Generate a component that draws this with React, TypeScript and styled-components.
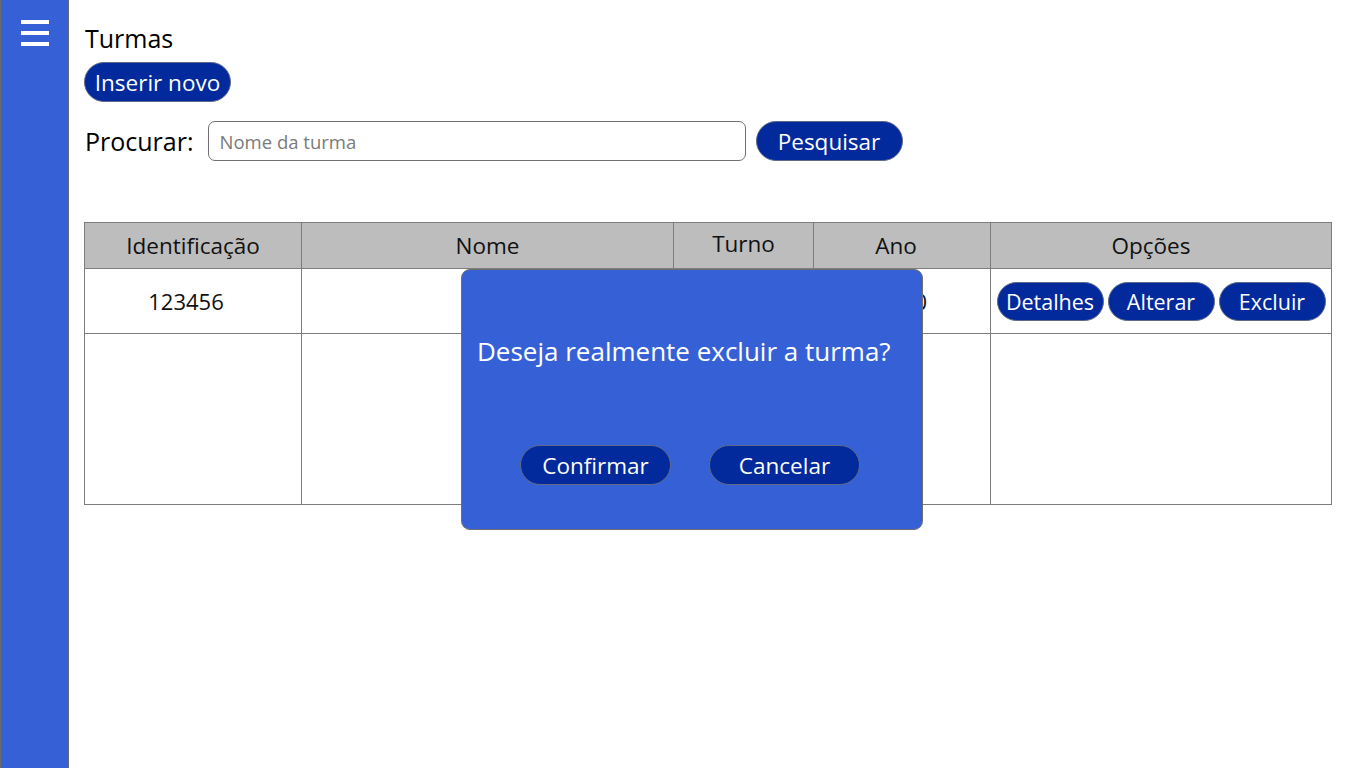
import styled, { createGlobalStyle } from 'styled-components'

const GlobalStyle = createGlobalStyle`
  body {
    margin: 0;
    font-family: 'Open Sans', 'Noto Sans', sans-serif;
    background: #ffffff;
  }
`

const rows = [
  { id: '123456', nome: '', turno: 'Manhã', ano: '2020' },
  { id: '', nome: '', turno: '', ano: '' },
]

export default function App() {
  return (
    <>
      <GlobalStyle />
      <Layout>
        <Sidebar>
          <MenuButton aria-label="Menu">
            <svg width="28" height="26" viewBox="0 0 28 26">
              <rect x="0" y="0" width="28" height="4" fill="#fff" />
              <rect x="0" y="11" width="28" height="4" fill="#fff" />
              <rect x="0" y="22" width="28" height="4" fill="#fff" />
            </svg>
          </MenuButton>
        </Sidebar>
        <Main>
          <Title>Turmas</Title>
          <PillButton $width={147}>Inserir novo</PillButton>
          <SearchRow>
            <SearchLabel>Procurar:</SearchLabel>
            <SearchInput placeholder="Nome da turma" />
            <PillButton $width={147}>Pesquisar</PillButton>
          </SearchRow>
          <TableWrapper>
            <Table>
              <colgroup>
                <col style={{ width: 217 }} />
                <col style={{ width: 372 }} />
                <col style={{ width: 140 }} />
                <col style={{ width: 177 }} />
                <col style={{ width: 341 }} />
              </colgroup>
              <thead>
                <tr>
                  <HeadCell>Identificação</HeadCell>
                  <HeadCell>Nome</HeadCell>
                  <HeadCell $raised>Turno</HeadCell>
                  <HeadCell $shiftLeft={12}>Ano</HeadCell>
                  <HeadCell $shiftLeft={20}>Opções</HeadCell>
                </tr>
              </thead>
              <tbody>
                {rows.map((row, i) => (
                  <BodyRow key={i} $height={i === 0 ? 65 : 171}>
                    <Cell $shiftLeft={14}>{row.id}</Cell>
                    <Cell>{row.nome}</Cell>
                    <Cell>{row.turno}</Cell>
                    <Cell>{row.ano}</Cell>
                    <Cell>
                      {i === 0 && (
                        <Options>
                          <SmallPill>Detalhes</SmallPill>
                          <SmallPill>Alterar</SmallPill>
                          <SmallPill>Excluir</SmallPill>
                        </Options>
                      )}
                    </Cell>
                  </BodyRow>
                ))}
              </tbody>
            </Table>
            <Modal>
              <ModalText>Deseja realmente excluir a turma?</ModalText>
              <ModalActions>
                <PillButton $width={151}>Confirmar</PillButton>
                <PillButton $width={151}>Cancelar</PillButton>
              </ModalActions>
            </Modal>
          </TableWrapper>
        </Main>
      </Layout>
    </>
  )
}

const Layout = styled.div`
  display: flex;
  min-height: 100vh;
`

const Sidebar = styled.aside`
  width: 69px;
  flex-shrink: 0;
  background-color: #3661d6;
  border-right: 1px solid #6b6b6b;
  border-left: 1px solid #6b6b6b;
  box-sizing: border-box;
  display: flex;
  justify-content: center;
  padding-top: 20px;
  height: 768px;
`

const MenuButton = styled.button`
  background: transparent;
  border: 0;
  padding: 0;
  height: 26px;
  display: flex;
  cursor: pointer;
`

const Main = styled.main`
  flex: 1;
  padding: 20px 34px 0 15px;
  display: flex;
  flex-direction: column;
  align-items: flex-start;
`

const Title = styled.h1`
  margin: 0 0 6px 1px;
  font-size: 25px;
  font-weight: 400;
  line-height: 36px;
  color: #000;
`

const PillButton = styled.button<{ $width: number }>`
  width: ${(p) => p.$width}px;
  height: 40px;
  border-radius: 20px;
  border: 1px solid #5f6a86;
  background-color: #022a9c;
  color: #ffffff;
  font-family: 'Open Sans', 'Noto Sans', sans-serif;
  font-size: 22.5px;
  padding: 0;
  cursor: pointer;
  white-space: nowrap;
`

const SearchRow = styled.div`
  display: flex;
  align-items: center;
  margin-top: 19px;
  gap: 10px;
`

const SearchLabel = styled.span`
  font-size: 25px;
  color: #000;
  margin-left: 1px;
  margin-right: 4px;
`

const SearchInput = styled.input`
  width: 538px;
  height: 40px;
  box-sizing: border-box;
  border: 1px solid #707070;
  border-radius: 7px;
  padding: 0 11px;
  font-family: 'Open Sans', 'Noto Sans', sans-serif;
  font-size: 18.5px;
  outline: none;

  &::placeholder {
    color: #7a7a7a;
  }
`

const TableWrapper = styled.div`
  position: relative;
  margin-top: 61px;
`

const Table = styled.table`
  border-collapse: collapse;
  table-layout: fixed;
  width: 1247px;
`

const HeadCell = styled.th<{ $raised?: boolean; $shiftLeft?: number }>`
  height: 46px;
  box-sizing: border-box;
  background-color: #bdbdbd;
  border: 1px solid #7d7d7d;
  font-weight: 400;
  font-size: 22.5px;
  color: #111;
  padding: 0 ${(p) => p.$shiftLeft ?? 0}px ${(p) => (p.$raised ? 4 : 0)}px 0;
  text-align: center;
`

const BodyRow = styled.tr<{ $height: number }>`
  height: ${(p) => p.$height}px;
`

const Cell = styled.td<{ $shiftLeft?: number }>`
  border: 1px solid #7d7d7d;
  text-align: center;
  font-size: 22px;
  color: #111;
  padding: 0 ${(p) => p.$shiftLeft ?? 0}px 0 0;
`

const Options = styled.div`
  display: flex;
  justify-content: center;
  gap: 4px;
`

const SmallPill = styled.button`
  width: 107px;
  height: 39px;
  border-radius: 20px;
  border: 1px solid #5f6a86;
  background-color: #022a9c;
  color: #ffffff;
  font-family: 'Open Sans', 'Noto Sans', sans-serif;
  font-size: 21.5px;
  padding: 0;
  cursor: pointer;
  white-space: nowrap;
`

const Modal = styled.div`
  position: absolute;
  top: 47px;
  left: 377px;
  width: 462px;
  height: 261px;
  box-sizing: border-box;
  background-color: #3661d6;
  border: 1px solid #6f6f6f;
  border-radius: 9px;
  display: flex;
  flex-direction: column;
  padding: 63px 16px 0 15px;
`

const ModalText = styled.p`
  margin: 0;
  font-size: 26px;
  color: #ffffff;
  line-height: 36px;
  white-space: nowrap;
`

const ModalActions = styled.div`
  display: flex;
  gap: 38px;
  margin: 76px 0 0 43px;
`
